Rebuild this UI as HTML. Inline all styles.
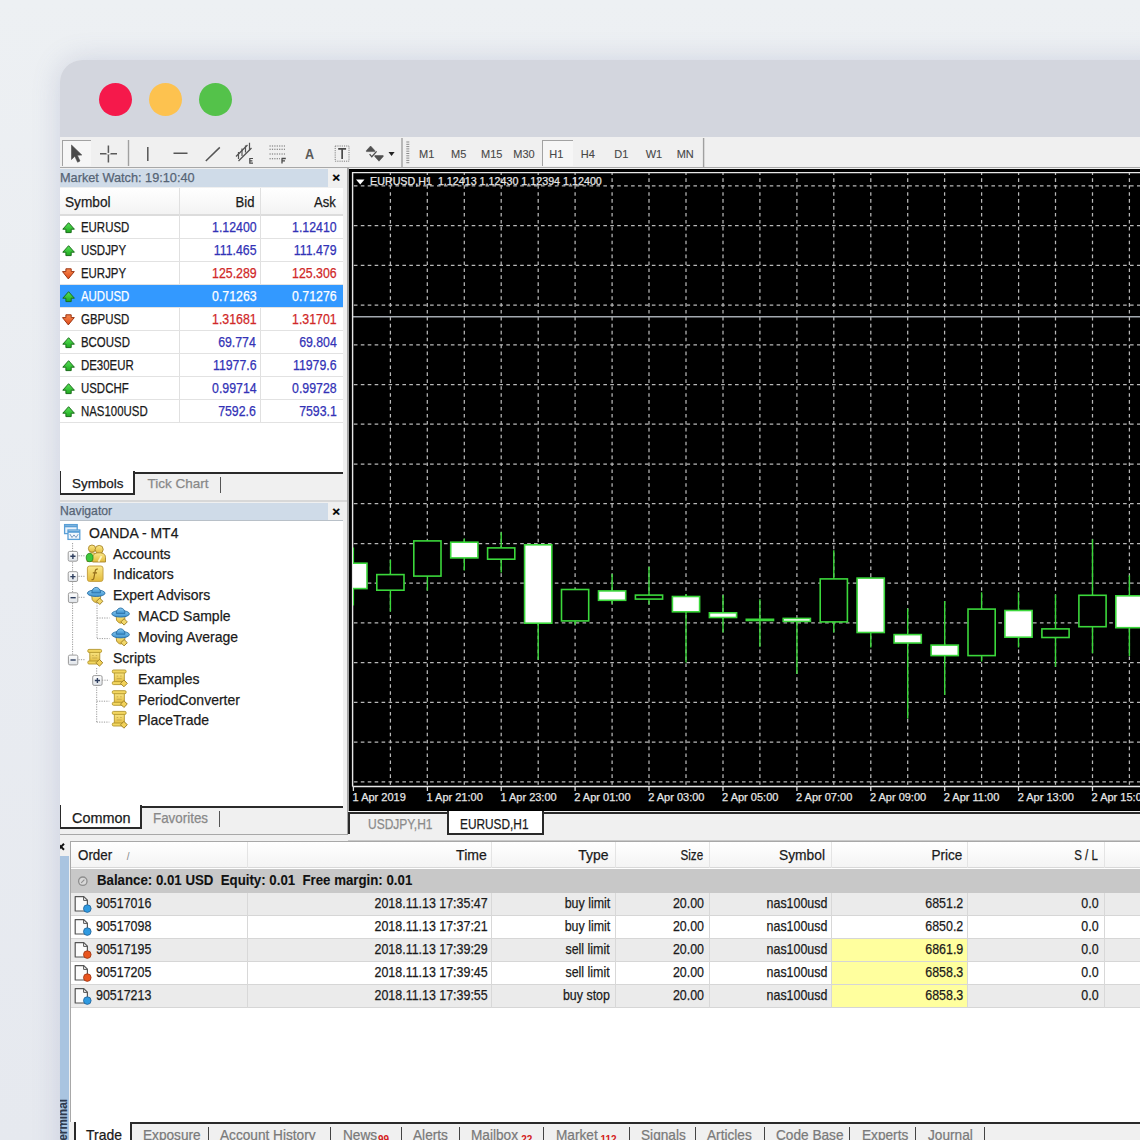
<!DOCTYPE html><html><head><meta charset="utf-8"><title>MT4</title><style>
*{margin:0;padding:0;box-sizing:border-box}
html,body{width:1140px;height:1140px;overflow:hidden}
body{position:relative;background:linear-gradient(180deg,#edf0f3 0%,#e9ecf1 50%,#e6e9ef 100%);font-family:"Liberation Sans",sans-serif;color:#1a1a1a}
.ab{position:absolute}
.t{position:absolute;white-space:nowrap;line-height:1}
svg{position:absolute;overflow:visible}
</style></head><body>
<div class="ab" style="left:60px;top:60px;width:1120px;height:1120px;border-top-left-radius:22px;background:#f0f0f0;box-shadow:0 0 28px rgba(100,110,160,0.22)"></div>
<div class="ab" style="left:60px;top:60px;width:1080px;height:77px;background:#d3d6de;border-top-left-radius:22px"></div>
<div class="ab" style="left:98.5px;top:83px;width:33px;height:33px;border-radius:50%;background:#f5194b"></div>
<div class="ab" style="left:148.5px;top:83px;width:33px;height:33px;border-radius:50%;background:#fdc24f"></div>
<div class="ab" style="left:198.5px;top:83px;width:33px;height:33px;border-radius:50%;background:#54c24a"></div>
<div class="ab" style="left:60px;top:137px;width:1080px;height:30px;background:#f0f0f0;"></div>
<div class="ab" style="left:60px;top:166.5px;width:1080px;height:1.5px;background:#a8a8a8;"></div>
<div class="ab" style="left:62px;top:139.5px;width:28.5px;height:26px;background:#f6f6f6;border-left:1.5px solid #a2a2a2;border-top:1.5px solid #a2a2a2"></div>
<div class="ab" style="left:542px;top:139.5px;width:31px;height:26px;background:#f6f6f6;border-left:1.5px solid #a2a2a2;border-top:1.5px solid #a2a2a2"></div>
<svg style="left:0;top:0" width="1140" height="200" viewBox="0 0 1140 200"><path d="M128.5 140V166M402 138V167M703.6 138V167" stroke="#a0a0a0" stroke-width="1.4"/><path d="M71.5 145L71.5 159.5L74.8 156.3L77.6 162.2L80 161L77.3 155.2L81.8 155z" fill="#4a4a4a" stroke="#4a4a4a" stroke-width="0.6" stroke-linejoin="round"/><path d="M108.4 145.5V162.5M100 153.7H117" stroke="#5a5a5a" stroke-width="1.5"/><path d="M106.5 153.7H110.5" stroke="#f0f0f0" stroke-width="1.6"/><path d="M147.8 147V161M173.5 153.3H187.5M205.8 161L219.8 147.4" stroke="#555" stroke-width="1.5"/><path d="M236 156.5L247.5 145M238.5 161L251.5 148" stroke="#555" stroke-width="1.3"/><path d="M238.5 152v7M242 148.5v7.5M245.5 145.5v7M249.5 142.8v7.5" stroke="#555" stroke-width="1.2"/><path d="M249.2 158.5h3.8M249.2 160.9h3.2M249.2 163.2h3.8M249.8 158.5V163.2" stroke="#4a4a4a" stroke-width="1.2"/><path d="M269.5 146H285M269.5 149.2H285M269.5 154H285M269.5 158.7H280" stroke="#6a6a6a" stroke-width="1.1" stroke-dasharray="1.2 1.2"/><path d="M281.5 158.5h4.3M281.5 160.9h3.5M282 158.5V163.5" stroke="#4a4a4a" stroke-width="1.3"/><rect x="335.2" y="146" width="13.8" height="15.2" fill="none" stroke="#7a7a7a" stroke-width="1" stroke-dasharray="1.1 1.1"/><path d="M338.2 148.8H346.1M342.15 148.8V159" stroke="#4a4a4a" stroke-width="1.7"/><path d="M366.4 150.6L370.6 146L374.8 150.6V151.6H366.4z M374.8 155.6H383.2V156.6L379 161.2L374.8 156.6z" fill="#505050" stroke="#505050" stroke-width="0.6" stroke-linejoin="round"/><path d="M369.6 154.2L371.8 156.8L376.6 151.4" stroke="#4e4e4e" stroke-width="1.3" fill="none"/><path d="M388.5 152.1H394.6L391.55 155.9z" fill="#222"/><path d="M406.3 142.0H409.3 M406.3 144.3H409.3 M406.3 146.6H409.3 M406.3 148.9H409.3 M406.3 151.2H409.3 M406.3 153.5H409.3 M406.3 155.8H409.3 M406.3 158.1H409.3 M406.3 160.4H409.3 M406.3 162.7H409.3" stroke="#8a8a8a" stroke-width="1"/></svg>
<div class="t" style="top:147.05px;font-size:14px;color:#5a5a5a;font-weight:bold;left:305.30px;transform:scaleX(0.900);transform-origin:0 0;">A</div>
<div class="t" style="top:148.69px;font-size:11px;color:#474747;-webkit-text-stroke:0.1px #474747;left:419.00px;">M1</div>
<div class="t" style="top:148.69px;font-size:11px;color:#474747;-webkit-text-stroke:0.1px #474747;left:451.00px;">M5</div>
<div class="t" style="top:148.69px;font-size:11px;color:#474747;-webkit-text-stroke:0.1px #474747;left:481.00px;">M15</div>
<div class="t" style="top:148.69px;font-size:11px;color:#474747;-webkit-text-stroke:0.1px #474747;left:513.30px;">M30</div>
<div class="t" style="top:148.69px;font-size:11px;color:#474747;-webkit-text-stroke:0.1px #474747;left:549.30px;">H1</div>
<div class="t" style="top:148.69px;font-size:11px;color:#474747;-webkit-text-stroke:0.1px #474747;left:580.70px;">H4</div>
<div class="t" style="top:148.69px;font-size:11px;color:#474747;-webkit-text-stroke:0.1px #474747;left:614.30px;">D1</div>
<div class="t" style="top:148.69px;font-size:11px;color:#474747;-webkit-text-stroke:0.1px #474747;left:645.70px;">W1</div>
<div class="t" style="top:148.69px;font-size:11px;color:#474747;-webkit-text-stroke:0.1px #474747;left:676.70px;">MN</div>
<div class="ab" style="left:60px;top:168px;width:289px;height:672px;background:#f0f0f0;"></div>
<div class="ab" style="left:60px;top:169px;width:268px;height:18px;background:#cfdbe8;"></div>
<div class="t" style="top:170.95px;font-size:13.4px;color:#566475;-webkit-text-stroke:0.25px #566475;left:60.00px;transform:scaleX(0.950);transform-origin:0 0;">Market Watch: 19:10:40</div>
<div class="t" style="top:170.77px;font-size:13.5px;color:#000;font-weight:bold;-webkit-text-stroke:0.2px #000;left:332.20px;">&#215;</div>
<div class="ab" style="left:60px;top:188px;width:283px;height:284px;background:#fff;"></div>
<div class="ab" style="left:60px;top:188px;width:283px;height:28px;background:linear-gradient(#fff,#f3f3f3);border-bottom:2px solid #dcdcdc"></div>
<div class="t" style="top:193.58px;font-size:15.5px;color:#1a1a1a;-webkit-text-stroke:0.25px #1a1a1a;left:64.70px;transform:scaleX(0.882);transform-origin:0 0;">Symbol</div>
<div class="t" style="top:193.58px;font-size:15.5px;color:#1a1a1a;-webkit-text-stroke:0.25px #1a1a1a;right:885.80px;transform:scaleX(0.844);transform-origin:100% 0;">Bid</div>
<div class="t" style="top:193.58px;font-size:15.5px;color:#1a1a1a;-webkit-text-stroke:0.25px #1a1a1a;right:804.20px;transform:scaleX(0.844);transform-origin:100% 0;">Ask</div>
<div class="ab" style="left:179px;top:188px;width:1px;height:235px;background:#e0e0e0;"></div>
<div class="ab" style="left:260px;top:188px;width:1px;height:235px;background:#e0e0e0;"></div>
<svg style="left:0;top:0" width="1" height="1"><defs><linearGradient id="ag" x1="0" y1="0" x2="0" y2="1"><stop offset="0" stop-color="#5ae45a"/><stop offset="1" stop-color="#1ea81e"/></linearGradient><linearGradient id="ar" x1="0" y1="0" x2="0" y2="1"><stop offset="0" stop-color="#f88a50"/><stop offset="1" stop-color="#e04a18"/></linearGradient></defs></svg>
<div class="ab" style="left:60px;top:238px;width:283px;height:1px;background:#e2e2e2;"></div>
<div class="t" style="top:219.85px;font-size:14.7px;color:#1a1a1a;-webkit-text-stroke:0.25px #1a1a1a;left:81.00px;transform:scaleX(0.778);transform-origin:0 0;">EURUSD</div>
<div class="t" style="top:220.45px;font-size:14px;color:#3232b6;-webkit-text-stroke:0.25px #3232b6;right:883.70px;transform:scaleX(0.880);transform-origin:100% 0;">1.12400</div>
<div class="t" style="top:220.45px;font-size:14px;color:#3232b6;-webkit-text-stroke:0.25px #3232b6;right:803.00px;transform:scaleX(0.880);transform-origin:100% 0;">1.12410</div>
<svg style="left:62px;top:221px" width="13" height="13" viewBox="0 0 13 13"><path d="M6.6 1.7L12.4 8.2H9.2V11.6H3.9V8.2H0.8z" fill="url(#ag)" stroke="#1a6e1a" stroke-width="1" stroke-linejoin="round"/></svg>
<div class="ab" style="left:60px;top:261px;width:283px;height:1px;background:#e2e2e2;"></div>
<div class="t" style="top:242.85px;font-size:14.7px;color:#1a1a1a;-webkit-text-stroke:0.25px #1a1a1a;left:81.00px;transform:scaleX(0.778);transform-origin:0 0;">USDJPY</div>
<div class="t" style="top:243.45px;font-size:14px;color:#3232b6;-webkit-text-stroke:0.25px #3232b6;right:883.70px;transform:scaleX(0.880);transform-origin:100% 0;">111.465</div>
<div class="t" style="top:243.45px;font-size:14px;color:#3232b6;-webkit-text-stroke:0.25px #3232b6;right:803.00px;transform:scaleX(0.880);transform-origin:100% 0;">111.479</div>
<svg style="left:62px;top:244px" width="13" height="13" viewBox="0 0 13 13"><path d="M6.6 1.7L12.4 8.2H9.2V11.6H3.9V8.2H0.8z" fill="url(#ag)" stroke="#1a6e1a" stroke-width="1" stroke-linejoin="round"/></svg>
<div class="ab" style="left:60px;top:284px;width:283px;height:1px;background:#e2e2e2;"></div>
<div class="t" style="top:265.85px;font-size:14.7px;color:#1a1a1a;-webkit-text-stroke:0.25px #1a1a1a;left:81.00px;transform:scaleX(0.778);transform-origin:0 0;">EURJPY</div>
<div class="t" style="top:266.45px;font-size:14px;color:#d02828;-webkit-text-stroke:0.25px #d02828;right:883.70px;transform:scaleX(0.880);transform-origin:100% 0;">125.289</div>
<div class="t" style="top:266.45px;font-size:14px;color:#d02828;-webkit-text-stroke:0.25px #d02828;right:803.00px;transform:scaleX(0.880);transform-origin:100% 0;">125.306</div>
<svg style="left:62px;top:267px" width="13" height="13" viewBox="0 0 13 13"><path d="M3.9 1.8H9.2V4.6H12.3L6.3 11.9L0.5 4.6H3.9z" fill="url(#ar)" stroke="#9a3412" stroke-width="1" stroke-linejoin="round"/></svg>
<div class="ab" style="left:60px;top:285px;width:283px;height:23px;background:#3399ff;"></div>
<div class="ab" style="left:60px;top:307px;width:283px;height:1px;background:#e2e2e2;"></div>
<div class="t" style="top:288.85px;font-size:14.7px;color:#fff;-webkit-text-stroke:0.25px #fff;left:81.00px;transform:scaleX(0.778);transform-origin:0 0;">AUDUSD</div>
<div class="t" style="top:289.45px;font-size:14px;color:#fff;-webkit-text-stroke:0.25px #fff;right:883.70px;transform:scaleX(0.880);transform-origin:100% 0;">0.71263</div>
<div class="t" style="top:289.45px;font-size:14px;color:#fff;-webkit-text-stroke:0.25px #fff;right:803.00px;transform:scaleX(0.880);transform-origin:100% 0;">0.71276</div>
<svg style="left:62px;top:290px" width="13" height="13" viewBox="0 0 13 13"><path d="M6.6 1.7L12.4 8.2H9.2V11.6H3.9V8.2H0.8z" fill="url(#ag)" stroke="#1a6e1a" stroke-width="1" stroke-linejoin="round"/></svg>
<div class="ab" style="left:60px;top:330px;width:283px;height:1px;background:#e2e2e2;"></div>
<div class="t" style="top:311.85px;font-size:14.7px;color:#1a1a1a;-webkit-text-stroke:0.25px #1a1a1a;left:81.00px;transform:scaleX(0.778);transform-origin:0 0;">GBPUSD</div>
<div class="t" style="top:312.45px;font-size:14px;color:#d02828;-webkit-text-stroke:0.25px #d02828;right:883.70px;transform:scaleX(0.880);transform-origin:100% 0;">1.31681</div>
<div class="t" style="top:312.45px;font-size:14px;color:#d02828;-webkit-text-stroke:0.25px #d02828;right:803.00px;transform:scaleX(0.880);transform-origin:100% 0;">1.31701</div>
<svg style="left:62px;top:313px" width="13" height="13" viewBox="0 0 13 13"><path d="M3.9 1.8H9.2V4.6H12.3L6.3 11.9L0.5 4.6H3.9z" fill="url(#ar)" stroke="#9a3412" stroke-width="1" stroke-linejoin="round"/></svg>
<div class="ab" style="left:60px;top:353px;width:283px;height:1px;background:#e2e2e2;"></div>
<div class="t" style="top:334.85px;font-size:14.7px;color:#1a1a1a;-webkit-text-stroke:0.25px #1a1a1a;left:81.00px;transform:scaleX(0.778);transform-origin:0 0;">BCOUSD</div>
<div class="t" style="top:335.45px;font-size:14px;color:#3232b6;-webkit-text-stroke:0.25px #3232b6;right:883.70px;transform:scaleX(0.880);transform-origin:100% 0;">69.774</div>
<div class="t" style="top:335.45px;font-size:14px;color:#3232b6;-webkit-text-stroke:0.25px #3232b6;right:803.00px;transform:scaleX(0.880);transform-origin:100% 0;">69.804</div>
<svg style="left:62px;top:336px" width="13" height="13" viewBox="0 0 13 13"><path d="M6.6 1.7L12.4 8.2H9.2V11.6H3.9V8.2H0.8z" fill="url(#ag)" stroke="#1a6e1a" stroke-width="1" stroke-linejoin="round"/></svg>
<div class="ab" style="left:60px;top:376px;width:283px;height:1px;background:#e2e2e2;"></div>
<div class="t" style="top:357.85px;font-size:14.7px;color:#1a1a1a;-webkit-text-stroke:0.25px #1a1a1a;left:81.00px;transform:scaleX(0.778);transform-origin:0 0;">DE30EUR</div>
<div class="t" style="top:358.45px;font-size:14px;color:#3232b6;-webkit-text-stroke:0.25px #3232b6;right:883.70px;transform:scaleX(0.880);transform-origin:100% 0;">11977.6</div>
<div class="t" style="top:358.45px;font-size:14px;color:#3232b6;-webkit-text-stroke:0.25px #3232b6;right:803.00px;transform:scaleX(0.880);transform-origin:100% 0;">11979.6</div>
<svg style="left:62px;top:359px" width="13" height="13" viewBox="0 0 13 13"><path d="M6.6 1.7L12.4 8.2H9.2V11.6H3.9V8.2H0.8z" fill="url(#ag)" stroke="#1a6e1a" stroke-width="1" stroke-linejoin="round"/></svg>
<div class="ab" style="left:60px;top:399px;width:283px;height:1px;background:#e2e2e2;"></div>
<div class="t" style="top:380.85px;font-size:14.7px;color:#1a1a1a;-webkit-text-stroke:0.25px #1a1a1a;left:81.00px;transform:scaleX(0.778);transform-origin:0 0;">USDCHF</div>
<div class="t" style="top:381.45px;font-size:14px;color:#3232b6;-webkit-text-stroke:0.25px #3232b6;right:883.70px;transform:scaleX(0.880);transform-origin:100% 0;">0.99714</div>
<div class="t" style="top:381.45px;font-size:14px;color:#3232b6;-webkit-text-stroke:0.25px #3232b6;right:803.00px;transform:scaleX(0.880);transform-origin:100% 0;">0.99728</div>
<svg style="left:62px;top:382px" width="13" height="13" viewBox="0 0 13 13"><path d="M6.6 1.7L12.4 8.2H9.2V11.6H3.9V8.2H0.8z" fill="url(#ag)" stroke="#1a6e1a" stroke-width="1" stroke-linejoin="round"/></svg>
<div class="ab" style="left:60px;top:422px;width:283px;height:1px;background:#e2e2e2;"></div>
<div class="t" style="top:403.85px;font-size:14.7px;color:#1a1a1a;-webkit-text-stroke:0.25px #1a1a1a;left:81.00px;transform:scaleX(0.778);transform-origin:0 0;">NAS100USD</div>
<div class="t" style="top:404.45px;font-size:14px;color:#3232b6;-webkit-text-stroke:0.25px #3232b6;right:883.70px;transform:scaleX(0.880);transform-origin:100% 0;">7592.6</div>
<div class="t" style="top:404.45px;font-size:14px;color:#3232b6;-webkit-text-stroke:0.25px #3232b6;right:803.00px;transform:scaleX(0.880);transform-origin:100% 0;">7593.1</div>
<svg style="left:62px;top:405px" width="13" height="13" viewBox="0 0 13 13"><path d="M6.6 1.7L12.4 8.2H9.2V11.6H3.9V8.2H0.8z" fill="url(#ag)" stroke="#1a6e1a" stroke-width="1" stroke-linejoin="round"/></svg>
<div class="ab" style="left:60px;top:472px;width:283px;height:23px;background:#f0f0f0;border-top:2px solid #2a2a2a"></div>
<div class="ab" style="left:60px;top:471px;width:75px;height:24px;background:#fff;border-left:1px solid #2a2a2a;border-right:2px solid #2a2a2a;border-bottom:2px solid #2a2a2a"></div>
<div class="t" style="top:476.57px;font-size:13.5px;color:#1a1a1a;-webkit-text-stroke:0.25px #1a1a1a;left:71.80px;transform:scaleX(0.993);transform-origin:0 0;">Symbols</div>
<div class="t" style="top:476.57px;font-size:13.5px;color:#888;-webkit-text-stroke:0.25px #888;left:147.60px;">Tick Chart</div>
<div class="ab" style="left:220px;top:477px;width:1px;height:16px;background:#555;"></div>
<div class="ab" style="left:60px;top:500px;width:289px;height:2px;background:#d8d8d8;"></div>
<div class="ab" style="left:60px;top:503px;width:268px;height:17px;background:#cfdbe8;"></div>
<div class="ab" style="left:60px;top:520px;width:283px;height:1px;background:#b8c0c8;"></div>
<div class="t" style="top:505.30px;font-size:12.4px;color:#566475;-webkit-text-stroke:0.25px #566475;left:60.00px;transform:scaleX(0.982);transform-origin:0 0;">Navigator</div>
<div class="t" style="top:504.97px;font-size:13.5px;color:#000;font-weight:bold;-webkit-text-stroke:0.2px #000;left:332.20px;">&#215;</div>
<div class="ab" style="left:60px;top:521px;width:283px;height:285px;background:#fff;"></div>
<div class="t" style="top:524.70px;font-size:15px;color:#1a1a1a;-webkit-text-stroke:0.25px #1a1a1a;left:89.20px;transform:scaleX(0.933);transform-origin:0 0;">OANDA - MT4</div>
<div class="t" style="top:545.60px;font-size:15px;color:#1a1a1a;-webkit-text-stroke:0.25px #1a1a1a;left:112.90px;transform:scaleX(0.933);transform-origin:0 0;">Accounts</div>
<div class="t" style="top:566.40px;font-size:15px;color:#1a1a1a;-webkit-text-stroke:0.25px #1a1a1a;left:112.90px;transform:scaleX(0.933);transform-origin:0 0;">Indicators</div>
<div class="t" style="top:587.30px;font-size:15px;color:#1a1a1a;-webkit-text-stroke:0.25px #1a1a1a;left:112.90px;transform:scaleX(0.933);transform-origin:0 0;">Expert Advisors</div>
<div class="t" style="top:608.10px;font-size:15px;color:#1a1a1a;-webkit-text-stroke:0.25px #1a1a1a;left:137.50px;transform:scaleX(0.933);transform-origin:0 0;">MACD Sample</div>
<div class="t" style="top:629.00px;font-size:15px;color:#1a1a1a;-webkit-text-stroke:0.25px #1a1a1a;left:137.50px;transform:scaleX(0.933);transform-origin:0 0;">Moving Average</div>
<div class="t" style="top:649.80px;font-size:15px;color:#1a1a1a;-webkit-text-stroke:0.25px #1a1a1a;left:113.00px;transform:scaleX(0.933);transform-origin:0 0;">Scripts</div>
<div class="t" style="top:670.70px;font-size:15px;color:#1a1a1a;-webkit-text-stroke:0.25px #1a1a1a;left:137.50px;transform:scaleX(0.933);transform-origin:0 0;">Examples</div>
<div class="t" style="top:691.50px;font-size:15px;color:#1a1a1a;-webkit-text-stroke:0.25px #1a1a1a;left:137.50px;transform:scaleX(0.933);transform-origin:0 0;">PeriodConverter</div>
<div class="t" style="top:712.30px;font-size:15px;color:#1a1a1a;-webkit-text-stroke:0.25px #1a1a1a;left:137.50px;transform:scaleX(0.933);transform-origin:0 0;">PlaceTrade</div>
<div class="ab" style="left:60px;top:806px;width:283px;height:23px;background:#f0f0f0;border-top:2px solid #2a2a2a"></div>
<div class="ab" style="left:60px;top:805px;width:82px;height:24px;background:#fff;border-left:1px solid #2a2a2a;border-right:2px solid #2a2a2a;border-bottom:2px solid #2a2a2a"></div>
<div class="t" style="top:809.80px;font-size:15px;color:#1a1a1a;-webkit-text-stroke:0.25px #1a1a1a;left:71.50px;transform:scaleX(0.961);transform-origin:0 0;">Common</div>
<div class="t" style="top:809.80px;font-size:15px;color:#888;-webkit-text-stroke:0.25px #888;left:152.50px;transform:scaleX(0.892);transform-origin:0 0;">Favorites</div>
<div class="ab" style="left:219px;top:811px;width:1px;height:16px;background:#555;"></div>
<div class="ab" style="left:60px;top:834px;width:289px;height:1px;background:#a8a8a8;"></div>
<div class="ab" style="left:347.2px;top:168px;width:1.8px;height:667px;background:#a4a4a4;"></div>
<svg style="left:0;top:0" width="1140" height="900" viewBox="0 0 1140 900"><defs>
<linearGradient id="gy" x1="0" y1="0" x2="0" y2="1"><stop offset="0" stop-color="#fbe98a"/><stop offset="1" stop-color="#e2b93a"/></linearGradient>
<linearGradient id="gb" x1="0" y1="0" x2="0" y2="1"><stop offset="0" stop-color="#8ccdf2"/><stop offset="1" stop-color="#3a8fce"/></linearGradient>
<linearGradient id="ge" x1="0" y1="0" x2="0" y2="1"><stop offset="0" stop-color="#fff"/><stop offset="1" stop-color="#dfe3e8"/></linearGradient>
<symbol id="ea" viewBox="0 0 19 19" overflow="visible">
 <path d="M4.5 9.5h9l-0.5 4.5c-1 2-3 3-4 3s-3-1-4-3z" fill="url(#gy)" stroke="#a88a2a" stroke-width="0.9"/>
 <path d="M12.5 12.5l3.2 3.2-3.2 3.2-3.2-3.2z" fill="#f2d86a" stroke="#9a7a22" stroke-width="0.9"/>
 <ellipse cx="9" cy="7.6" rx="8.8" ry="3.3" fill="url(#gb)" stroke="#2a6fa5" stroke-width="0.9"/>
 <path d="M4.6 7.2c0-3.2 2-5.4 4.4-5.4s4.4 2.2 4.4 5.4z" fill="url(#gb)" stroke="#2a6fa5" stroke-width="0.9"/>
</symbol>
<symbol id="sc" viewBox="0 0 16 17" overflow="visible">
 <rect x="2.6" y="2" width="10" height="11.5" fill="url(#gy)" stroke="#b2962e" stroke-width="0.9"/>
 <rect x="0.6" y="0.4" width="13.8" height="3" rx="1.2" fill="#f3d660" stroke="#b2962e" stroke-width="0.9"/>
 <rect x="0.6" y="12" width="13.8" height="3" rx="1.2" fill="#f3d660" stroke="#b2962e" stroke-width="0.9"/>
 <path d="M5 6.5h1.5M8.5 6.5h1.5M5 9h5" stroke="#c6a94a" stroke-width="0.9"/>
 <path d="M12.2 10.4l3.4 3.4-3.4 3.4-3.4-3.4z" fill="#f2d25a" stroke="#9a7a22" stroke-width="0.9"/>
</symbol>
<symbol id="pl" viewBox="0 0 10 10" overflow="visible">
 <rect x="0.5" y="0.5" width="9.4" height="9.8" rx="1.5" fill="url(#ge)" stroke="#9a9a9a" stroke-width="1"/>
 <path d="M2.6 5.4H7.8M5.2 2.8V8" stroke="#2e3e5e" stroke-width="1.4"/>
</symbol>
<symbol id="mi" viewBox="0 0 10 10" overflow="visible">
 <rect x="0.5" y="0.5" width="9.4" height="9.8" rx="1.5" fill="url(#ge)" stroke="#9a9a9a" stroke-width="1"/>
 <path d="M2.6 5.4H7.8" stroke="#2e3e5e" stroke-width="1.4"/>
</symbol>
</defs><path d="M72.6 543V659.7M78.5 555.8H85.5M78.5 576.3H85.5M78.5 597.3H85.5M78.5 659.7H85.5" stroke="#9a9a9a" stroke-width="1" stroke-dasharray="1.2 1.2" fill="none"/><path d="M97 603V638.6M97 618H109.5M97 638.6H109.5" stroke="#9a9a9a" stroke-width="1" stroke-dasharray="1.2 1.2" fill="none"/><path d="M96.7 668V722.1M102 680.2H109.3M96.7 701.2H109.3M96.7 722.1H109.3" stroke="#9a9a9a" stroke-width="1" stroke-dasharray="1.2 1.2" fill="none"/><use href="#pl" x="67.7" y="550.9" width="10" height="10"/><use href="#pl" x="67.7" y="571.2" width="10" height="10"/><use href="#mi" x="67.9" y="592.3" width="10" height="10"/><use href="#mi" x="67.9" y="654.6" width="10" height="10"/><use href="#pl" x="92.2" y="675.1" width="10" height="10"/><rect x="64.6" y="524.6" width="12.6" height="9" fill="#eaf3fb" stroke="#5a9fd6" stroke-width="1.3"/><path d="M64.6 526.3h12.6" stroke="#5a9fd6" stroke-width="2"/><rect x="68" y="530" width="11.8" height="9.4" fill="#f3f8fd" stroke="#5a9fd6" stroke-width="1.3"/><path d="M68 531.8h11.8" stroke="#5a9fd6" stroke-width="2"/><path d="M69.8 534l2.2 3.5 2-2.6 2 2.6 2.2-3.3" stroke="#6a8fb8" stroke-width="0.9" fill="none"/><circle cx="92" cy="548.6" r="3.6" fill="url(#gy)" stroke="#a8862a" stroke-width="0.9"/><path d="M87 561.5v-4.2c0-3 2-4.6 5-4.6s5 1.6 5 4.6v4.2z" fill="url(#gy)" stroke="#a8862a" stroke-width="0.9"/><circle cx="99.2" cy="549.4" r="4" fill="url(#gy)" stroke="#a8862a" stroke-width="0.9"/><path d="M92.6 562v-4.4c0-3.2 2.6-4.8 6.6-4.8s6.3 1.6 6.3 4.8v4.4z" fill="url(#gy)" stroke="#a8862a" stroke-width="0.9"/><path d="M98.5 561.6l3-5.5" stroke="#fff3c0" stroke-width="1.8"/><ellipse cx="89.6" cy="557.6" rx="3.4" ry="4.1" fill="#3cc83c" stroke="#1d8a1f" stroke-width="0.8"/><rect x="87.4" y="566" width="15.6" height="15.4" rx="2.2" fill="url(#gy)" stroke="#c6a244" stroke-width="1"/><path d="M97.8 569.2c-1.6-0.4-2.4 0.5-2.7 2.3l-1.2 6.4c-0.3 1.5-1 2-2.4 1.7M92.8 572.8h4.2" stroke="#946d1a" stroke-width="1.2" fill="none"/><use href="#ea" x="87.2" y="585.6" width="19" height="19"/><use href="#ea" x="111.6" y="606.2" width="19" height="19"/><use href="#ea" x="111.6" y="627" width="19" height="19"/><use href="#sc" x="87.2" y="649" width="16" height="17"/><use href="#sc" x="111.7" y="669.6" width="16" height="17"/><use href="#sc" x="111.7" y="690.3" width="16" height="17"/><use href="#sc" x="111.7" y="711" width="16" height="17"/></svg>
<div class="ab" style="left:349px;top:169px;width:791px;height:641.5px;background:#000;"></div>
<svg style="left:0;top:0" width="1140" height="1140" viewBox="0 0 1140 1140"><defs><clipPath id="pc"><rect x="353" y="173" width="787" height="613"/></clipPath></defs><path d="M353 185.8H1140 M353 225.5H1140 M353 265.3H1140 M353 305.0H1140 M353 344.8H1140 M353 384.5H1140 M353 424.2H1140 M353 464.0H1140 M353 503.7H1140 M353 543.5H1140 M353 583.2H1140 M353 622.9H1140 M353 662.7H1140 M353 702.4H1140 M353 742.2H1140 M353 781.9H1140" stroke="#b8b8b8" stroke-width="1.25" stroke-dasharray="3.6 3.33" stroke-dashoffset="6.06" fill="none"/><path d="M390.4 173V786 M427.3 173V786 M464.3 173V786 M501.2 173V786 M538.2 173V786 M575.1 173V786 M612.1 173V786 M649.0 173V786 M686.0 173V786 M723.0 173V786 M759.9 173V786 M796.9 173V786 M833.8 173V786 M870.8 173V786 M907.7 173V786 M944.6 173V786 M981.6 173V786 M1018.6 173V786 M1055.5 173V786 M1092.5 173V786 M1129.4 173V786" stroke="#b8b8b8" stroke-width="1.25" stroke-dasharray="3.6 3.33" stroke-dashoffset="1.6" fill="none"/><path d="M353 316.7H1140" stroke="#a3a9b0" stroke-width="1.5" fill="none"/><path d="M352.6 786.5V172.6H1140 M352.6 786.5H1140" stroke="#e8e8e8" stroke-width="1.4" fill="none"/><g clip-path="url(#pc)"><path d="M353.4 547.5V605.4" stroke="#3bd83b" stroke-width="1.4"/><rect x="339.8" y="563.2" width="27.2" height="25.4" fill="#fff" stroke="#3bd83b" stroke-width="1.6"/><path d="M390.4 559.8V611.6" stroke="#3bd83b" stroke-width="1.4"/><rect x="376.8" y="574.6" width="27.2" height="15.6" fill="#000" stroke="#3bd83b" stroke-width="1.6"/><path d="M427.4 540.2V590.5" stroke="#3bd83b" stroke-width="1.4"/><rect x="413.8" y="540.9" width="27.2" height="35.2" fill="#000" stroke="#3bd83b" stroke-width="1.6"/><path d="M464.3 538.4V570.4" stroke="#3bd83b" stroke-width="1.4"/><rect x="450.7" y="542.2" width="27.2" height="15.7" fill="#fff" stroke="#3bd83b" stroke-width="1.6"/><path d="M501.2 532.3V572.6" stroke="#3bd83b" stroke-width="1.4"/><rect x="487.6" y="547.9" width="27.2" height="11.3" fill="#000" stroke="#3bd83b" stroke-width="1.6"/><path d="M538.2 544.1V659.8" stroke="#3bd83b" stroke-width="1.4"/><rect x="524.6" y="544.8" width="27.2" height="78.4" fill="#fff" stroke="#3bd83b" stroke-width="1.6"/><path d="M575.1 588.8V624.7" stroke="#3bd83b" stroke-width="1.4"/><rect x="561.5" y="589.5" width="27.2" height="31.4" fill="#000" stroke="#3bd83b" stroke-width="1.6"/><path d="M612.1 573.9V603.7" stroke="#3bd83b" stroke-width="1.4"/><rect x="598.5" y="590.9" width="27.2" height="9.4" fill="#fff" stroke="#3bd83b" stroke-width="1.6"/><path d="M649.0 566.8V604.6" stroke="#3bd83b" stroke-width="1.4"/><rect x="635.4" y="595.1" width="27.2" height="4.0" fill="#000" stroke="#3bd83b" stroke-width="1.6"/><path d="M686.0 594.0V662.5" stroke="#3bd83b" stroke-width="1.4"/><rect x="672.4" y="596.5" width="27.2" height="15.3" fill="#fff" stroke="#3bd83b" stroke-width="1.6"/><path d="M723.0 594.9V632.6" stroke="#3bd83b" stroke-width="1.4"/><rect x="709.4" y="612.8" width="27.2" height="4.7" fill="#fff" stroke="#3bd83b" stroke-width="1.6"/><path d="M759.9 599.3V646.7" stroke="#3bd83b" stroke-width="1.4"/><rect x="746.3" y="619.3" width="27.2" height="1.2" fill="#000" stroke="#3bd83b" stroke-width="1.6"/><path d="M796.9 617.7V673.9" stroke="#3bd83b" stroke-width="1.4"/><rect x="783.2" y="618.4" width="27.2" height="3.0" fill="#fff" stroke="#3bd83b" stroke-width="1.6"/><path d="M833.8 550.2V632.6" stroke="#3bd83b" stroke-width="1.4"/><rect x="820.2" y="578.9" width="27.2" height="43.0" fill="#000" stroke="#3bd83b" stroke-width="1.6"/><path d="M870.8 577.4V647.5" stroke="#3bd83b" stroke-width="1.4"/><rect x="857.1" y="578.1" width="27.2" height="54.4" fill="#fff" stroke="#3bd83b" stroke-width="1.6"/><path d="M907.7 608.6V718.6" stroke="#3bd83b" stroke-width="1.4"/><rect x="894.1" y="634.6" width="27.2" height="8.4" fill="#fff" stroke="#3bd83b" stroke-width="1.6"/><path d="M944.7 601.0V694.9" stroke="#3bd83b" stroke-width="1.4"/><rect x="931.1" y="645.1" width="27.2" height="10.5" fill="#fff" stroke="#3bd83b" stroke-width="1.6"/><path d="M981.6 592.3V661.6" stroke="#3bd83b" stroke-width="1.4"/><rect x="968.0" y="609.1" width="27.2" height="46.5" fill="#000" stroke="#3bd83b" stroke-width="1.6"/><path d="M1018.5 592.3V647.5" stroke="#3bd83b" stroke-width="1.4"/><rect x="1004.9" y="610.5" width="27.2" height="26.7" fill="#fff" stroke="#3bd83b" stroke-width="1.6"/><path d="M1055.5 594.6V666.8" stroke="#3bd83b" stroke-width="1.4"/><rect x="1041.9" y="628.9" width="27.2" height="8.6" fill="#000" stroke="#3bd83b" stroke-width="1.6"/><path d="M1092.5 539.3V653.3" stroke="#3bd83b" stroke-width="1.4"/><rect x="1078.9" y="595.3" width="27.2" height="31.4" fill="#000" stroke="#3bd83b" stroke-width="1.6"/><path d="M1129.4 575.3V656.0" stroke="#3bd83b" stroke-width="1.4"/><rect x="1115.8" y="595.8" width="27.2" height="31.9" fill="#fff" stroke="#3bd83b" stroke-width="1.6"/></g><path d="M353.4 786V791 M427.4 786V791 M501.2 786V791 M575.1 786V791 M649.0 786V791 M723.0 786V791 M796.9 786V791 M870.8 786V791 M944.7 786V791 M1018.5 786V791 M1092.5 786V791" stroke="#ddd" stroke-width="1.3"/><path d="M356 179.5h8.5l-4.25 5z" fill="#fff"/></svg>
<div class="t" style="top:176.46px;font-size:11.5px;color:#e6e6e6;-webkit-text-stroke:0.25px #e6e6e6;left:370.00px;transform:scaleX(0.932);transform-origin:0 0;">EURUSD,H1&nbsp; 1.12413 1.12430 1.12394 1.12400</div>
<div class="t" style="top:791.69px;font-size:11px;color:#e6e6e6;-webkit-text-stroke:0.25px #e6e6e6;left:352.60px;">1 Apr 2019</div>
<div class="t" style="top:791.69px;font-size:11px;color:#e6e6e6;-webkit-text-stroke:0.25px #e6e6e6;left:426.50px;">1 Apr 21:00</div>
<div class="t" style="top:791.69px;font-size:11px;color:#e6e6e6;-webkit-text-stroke:0.25px #e6e6e6;left:500.40px;">1 Apr 23:00</div>
<div class="t" style="top:791.69px;font-size:11px;color:#e6e6e6;-webkit-text-stroke:0.25px #e6e6e6;left:574.30px;">2 Apr 01:00</div>
<div class="t" style="top:791.69px;font-size:11px;color:#e6e6e6;-webkit-text-stroke:0.25px #e6e6e6;left:648.20px;">2 Apr 03:00</div>
<div class="t" style="top:791.69px;font-size:11px;color:#e6e6e6;-webkit-text-stroke:0.25px #e6e6e6;left:722.10px;">2 Apr 05:00</div>
<div class="t" style="top:791.69px;font-size:11px;color:#e6e6e6;-webkit-text-stroke:0.25px #e6e6e6;left:796.00px;">2 Apr 07:00</div>
<div class="t" style="top:791.69px;font-size:11px;color:#e6e6e6;-webkit-text-stroke:0.25px #e6e6e6;left:869.90px;">2 Apr 09:00</div>
<div class="t" style="top:791.69px;font-size:11px;color:#e6e6e6;-webkit-text-stroke:0.25px #e6e6e6;left:943.80px;">2 Apr 11:00</div>
<div class="t" style="top:791.69px;font-size:11px;color:#e6e6e6;-webkit-text-stroke:0.25px #e6e6e6;left:1017.70px;">2 Apr 13:00</div>
<div class="t" style="top:791.69px;font-size:11px;color:#e6e6e6;-webkit-text-stroke:0.25px #e6e6e6;left:1091.60px;">2 Apr 15:00</div>
<div class="ab" style="left:348px;top:810.5px;width:792px;height:30px;background:#f0f0f0;"></div>
<div class="ab" style="left:348px;top:812.3px;width:792px;height:1.8px;background:#2a2a2a;"></div>
<div class="ab" style="left:348px;top:812.3px;width:1.8px;height:22px;background:#2a2a2a;"></div>
<div class="ab" style="left:447px;top:810.5px;width:97px;height:24.5px;background:#fff;border:2px solid #2a2a2a;border-top:none"></div>
<div class="t" style="top:815.60px;font-size:15px;color:#8a8a8a;-webkit-text-stroke:0.25px #8a8a8a;left:367.60px;transform:scaleX(0.800);transform-origin:0 0;">USDJPY,H1</div>
<div class="t" style="top:815.60px;font-size:15px;color:#1a1a1a;-webkit-text-stroke:0.25px #1a1a1a;left:459.70px;transform:scaleX(0.790);transform-origin:0 0;">EURUSD,H1</div>
<div class="ab" style="left:348px;top:840px;width:792px;height:1px;background:#c8c8c8;"></div>
<div class="ab" style="left:60px;top:841px;width:1080px;height:299px;background:#f0f0f0;"></div>
<div class="ab" style="left:60px;top:856px;width:9px;height:284px;background:#a9c4e0;"></div>
<div class="ab" style="left:70px;top:841px;width:1070px;height:281px;background:#fff;border-left:1px solid #a8a8a8;border-top:1px solid #a8a8a8"></div>
<div class="ab" style="left:71px;top:842px;width:1069px;height:26px;background:linear-gradient(#fff,#f4f4f4);border-bottom:1px solid #d8d8d8"></div>
<div class="t" style="top:846.70px;font-size:15px;color:#1a1a1a;-webkit-text-stroke:0.25px #1a1a1a;left:78.40px;transform:scaleX(0.892);transform-origin:0 0;">Order</div>
<div class="t" style="top:851.53px;font-size:10px;color:#888;left:126.70px;">/</div>
<div class="t" style="top:846.60px;font-size:15px;color:#1a1a1a;-webkit-text-stroke:0.25px #1a1a1a;right:653.00px;transform:scaleX(0.937);transform-origin:100% 0;">Time</div>
<div class="t" style="top:846.60px;font-size:15px;color:#1a1a1a;-webkit-text-stroke:0.25px #1a1a1a;right:531.00px;transform:scaleX(0.932);transform-origin:100% 0;">Type</div>
<div class="t" style="top:846.60px;font-size:15px;color:#1a1a1a;-webkit-text-stroke:0.25px #1a1a1a;right:437.00px;transform:scaleX(0.778);transform-origin:100% 0;">Size</div>
<div class="t" style="top:846.60px;font-size:15px;color:#1a1a1a;-webkit-text-stroke:0.25px #1a1a1a;right:315.00px;transform:scaleX(0.920);transform-origin:100% 0;">Symbol</div>
<div class="t" style="top:846.60px;font-size:15px;color:#1a1a1a;-webkit-text-stroke:0.25px #1a1a1a;right:178.00px;transform:scaleX(0.901);transform-origin:100% 0;">Price</div>
<div class="t" style="top:846.60px;font-size:15px;color:#1a1a1a;-webkit-text-stroke:0.25px #1a1a1a;right:42.40px;transform:scaleX(0.768);transform-origin:100% 0;">S / L</div>
<div class="ab" style="left:71px;top:869px;width:1069px;height:24px;background:#c8c8c8;"></div>
<div class="t" style="top:873.02px;font-size:14.5px;color:#111;font-weight:bold;-webkit-text-stroke:0.1px #111;left:96.80px;transform:scaleX(0.914);transform-origin:0 0;">Balance: 0.01 USD&nbsp; Equity: 0.01&nbsp; Free margin: 0.01</div>
<div class="ab" style="left:71px;top:893px;width:1069px;height:23px;background:#ebebeb;"></div>
<div class="ab" style="left:71px;top:914.5px;width:1069px;height:1.5px;background:#d6d6d6;"></div>
<div class="t" style="top:896.07px;font-size:14.8px;color:#1a1a1a;-webkit-text-stroke:0.25px #1a1a1a;left:95.90px;transform:scaleX(0.840);transform-origin:0 0;">90517016</div>
<div class="t" style="top:896.07px;font-size:14.8px;color:#1a1a1a;-webkit-text-stroke:0.25px #1a1a1a;right:652.50px;transform:scaleX(0.840);transform-origin:100% 0;">2018.11.13 17:35:47</div>
<div class="t" style="top:896.07px;font-size:14.8px;color:#1a1a1a;-webkit-text-stroke:0.25px #1a1a1a;right:530.00px;transform:scaleX(0.840);transform-origin:100% 0;">buy limit</div>
<div class="t" style="top:896.07px;font-size:14.8px;color:#1a1a1a;-webkit-text-stroke:0.25px #1a1a1a;right:436.00px;transform:scaleX(0.840);transform-origin:100% 0;">20.00</div>
<div class="t" style="top:896.07px;font-size:14.8px;color:#1a1a1a;-webkit-text-stroke:0.25px #1a1a1a;right:312.50px;transform:scaleX(0.840);transform-origin:100% 0;">nas100usd</div>
<div class="t" style="top:896.07px;font-size:14.8px;color:#1a1a1a;-webkit-text-stroke:0.25px #1a1a1a;right:177.00px;transform:scaleX(0.840);transform-origin:100% 0;">6851.2</div>
<div class="t" style="top:896.07px;font-size:14.8px;color:#1a1a1a;-webkit-text-stroke:0.25px #1a1a1a;right:41.00px;transform:scaleX(0.840);transform-origin:100% 0;">0.0</div>
<div class="ab" style="left:71px;top:916px;width:1069px;height:23px;background:#fff;"></div>
<div class="ab" style="left:71px;top:937.5px;width:1069px;height:1.5px;background:#d6d6d6;"></div>
<div class="t" style="top:919.07px;font-size:14.8px;color:#1a1a1a;-webkit-text-stroke:0.25px #1a1a1a;left:95.90px;transform:scaleX(0.840);transform-origin:0 0;">90517098</div>
<div class="t" style="top:919.07px;font-size:14.8px;color:#1a1a1a;-webkit-text-stroke:0.25px #1a1a1a;right:652.50px;transform:scaleX(0.840);transform-origin:100% 0;">2018.11.13 17:37:21</div>
<div class="t" style="top:919.07px;font-size:14.8px;color:#1a1a1a;-webkit-text-stroke:0.25px #1a1a1a;right:530.00px;transform:scaleX(0.840);transform-origin:100% 0;">buy limit</div>
<div class="t" style="top:919.07px;font-size:14.8px;color:#1a1a1a;-webkit-text-stroke:0.25px #1a1a1a;right:436.00px;transform:scaleX(0.840);transform-origin:100% 0;">20.00</div>
<div class="t" style="top:919.07px;font-size:14.8px;color:#1a1a1a;-webkit-text-stroke:0.25px #1a1a1a;right:312.50px;transform:scaleX(0.840);transform-origin:100% 0;">nas100usd</div>
<div class="t" style="top:919.07px;font-size:14.8px;color:#1a1a1a;-webkit-text-stroke:0.25px #1a1a1a;right:177.00px;transform:scaleX(0.840);transform-origin:100% 0;">6850.2</div>
<div class="t" style="top:919.07px;font-size:14.8px;color:#1a1a1a;-webkit-text-stroke:0.25px #1a1a1a;right:41.00px;transform:scaleX(0.840);transform-origin:100% 0;">0.0</div>
<div class="ab" style="left:71px;top:939px;width:1069px;height:23px;background:#ebebeb;"></div>
<div class="ab" style="left:71px;top:960.5px;width:1069px;height:1.5px;background:#d6d6d6;"></div>
<div class="ab" style="left:832px;top:939px;width:135px;height:21.5px;background:#ffff9e;"></div>
<div class="t" style="top:942.07px;font-size:14.8px;color:#1a1a1a;-webkit-text-stroke:0.25px #1a1a1a;left:95.90px;transform:scaleX(0.840);transform-origin:0 0;">90517195</div>
<div class="t" style="top:942.07px;font-size:14.8px;color:#1a1a1a;-webkit-text-stroke:0.25px #1a1a1a;right:652.50px;transform:scaleX(0.840);transform-origin:100% 0;">2018.11.13 17:39:29</div>
<div class="t" style="top:942.07px;font-size:14.8px;color:#1a1a1a;-webkit-text-stroke:0.25px #1a1a1a;right:530.00px;transform:scaleX(0.840);transform-origin:100% 0;">sell limit</div>
<div class="t" style="top:942.07px;font-size:14.8px;color:#1a1a1a;-webkit-text-stroke:0.25px #1a1a1a;right:436.00px;transform:scaleX(0.840);transform-origin:100% 0;">20.00</div>
<div class="t" style="top:942.07px;font-size:14.8px;color:#1a1a1a;-webkit-text-stroke:0.25px #1a1a1a;right:312.50px;transform:scaleX(0.840);transform-origin:100% 0;">nas100usd</div>
<div class="t" style="top:942.07px;font-size:14.8px;color:#1a1a1a;-webkit-text-stroke:0.25px #1a1a1a;right:177.00px;transform:scaleX(0.840);transform-origin:100% 0;">6861.9</div>
<div class="t" style="top:942.07px;font-size:14.8px;color:#1a1a1a;-webkit-text-stroke:0.25px #1a1a1a;right:41.00px;transform:scaleX(0.840);transform-origin:100% 0;">0.0</div>
<div class="ab" style="left:71px;top:962px;width:1069px;height:23px;background:#fff;"></div>
<div class="ab" style="left:71px;top:983.5px;width:1069px;height:1.5px;background:#d6d6d6;"></div>
<div class="ab" style="left:832px;top:962px;width:135px;height:21.5px;background:#ffff9e;"></div>
<div class="t" style="top:965.07px;font-size:14.8px;color:#1a1a1a;-webkit-text-stroke:0.25px #1a1a1a;left:95.90px;transform:scaleX(0.840);transform-origin:0 0;">90517205</div>
<div class="t" style="top:965.07px;font-size:14.8px;color:#1a1a1a;-webkit-text-stroke:0.25px #1a1a1a;right:652.50px;transform:scaleX(0.840);transform-origin:100% 0;">2018.11.13 17:39:45</div>
<div class="t" style="top:965.07px;font-size:14.8px;color:#1a1a1a;-webkit-text-stroke:0.25px #1a1a1a;right:530.00px;transform:scaleX(0.840);transform-origin:100% 0;">sell limit</div>
<div class="t" style="top:965.07px;font-size:14.8px;color:#1a1a1a;-webkit-text-stroke:0.25px #1a1a1a;right:436.00px;transform:scaleX(0.840);transform-origin:100% 0;">20.00</div>
<div class="t" style="top:965.07px;font-size:14.8px;color:#1a1a1a;-webkit-text-stroke:0.25px #1a1a1a;right:312.50px;transform:scaleX(0.840);transform-origin:100% 0;">nas100usd</div>
<div class="t" style="top:965.07px;font-size:14.8px;color:#1a1a1a;-webkit-text-stroke:0.25px #1a1a1a;right:177.00px;transform:scaleX(0.840);transform-origin:100% 0;">6858.3</div>
<div class="t" style="top:965.07px;font-size:14.8px;color:#1a1a1a;-webkit-text-stroke:0.25px #1a1a1a;right:41.00px;transform:scaleX(0.840);transform-origin:100% 0;">0.0</div>
<div class="ab" style="left:71px;top:985px;width:1069px;height:23px;background:#ebebeb;"></div>
<div class="ab" style="left:71px;top:1006.5px;width:1069px;height:1.5px;background:#d6d6d6;"></div>
<div class="ab" style="left:832px;top:985px;width:135px;height:21.5px;background:#ffff9e;"></div>
<div class="t" style="top:988.07px;font-size:14.8px;color:#1a1a1a;-webkit-text-stroke:0.25px #1a1a1a;left:95.90px;transform:scaleX(0.840);transform-origin:0 0;">90517213</div>
<div class="t" style="top:988.07px;font-size:14.8px;color:#1a1a1a;-webkit-text-stroke:0.25px #1a1a1a;right:652.50px;transform:scaleX(0.840);transform-origin:100% 0;">2018.11.13 17:39:55</div>
<div class="t" style="top:988.07px;font-size:14.8px;color:#1a1a1a;-webkit-text-stroke:0.25px #1a1a1a;right:530.00px;transform:scaleX(0.840);transform-origin:100% 0;">buy stop</div>
<div class="t" style="top:988.07px;font-size:14.8px;color:#1a1a1a;-webkit-text-stroke:0.25px #1a1a1a;right:436.00px;transform:scaleX(0.840);transform-origin:100% 0;">20.00</div>
<div class="t" style="top:988.07px;font-size:14.8px;color:#1a1a1a;-webkit-text-stroke:0.25px #1a1a1a;right:312.50px;transform:scaleX(0.840);transform-origin:100% 0;">nas100usd</div>
<div class="t" style="top:988.07px;font-size:14.8px;color:#1a1a1a;-webkit-text-stroke:0.25px #1a1a1a;right:177.00px;transform:scaleX(0.840);transform-origin:100% 0;">6858.3</div>
<div class="t" style="top:988.07px;font-size:14.8px;color:#1a1a1a;-webkit-text-stroke:0.25px #1a1a1a;right:41.00px;transform:scaleX(0.840);transform-origin:100% 0;">0.0</div>
<div class="ab" style="left:246.5px;top:842px;width:1px;height:26px;background:#e4e4e4;"></div>
<div class="ab" style="left:246.5px;top:893px;width:1px;height:115px;background:#d8d8d8;"></div>
<div class="ab" style="left:491px;top:842px;width:1px;height:26px;background:#e4e4e4;"></div>
<div class="ab" style="left:491px;top:893px;width:1px;height:115px;background:#d8d8d8;"></div>
<div class="ab" style="left:615px;top:842px;width:1px;height:26px;background:#e4e4e4;"></div>
<div class="ab" style="left:615px;top:893px;width:1px;height:115px;background:#d8d8d8;"></div>
<div class="ab" style="left:708.5px;top:842px;width:1px;height:26px;background:#e4e4e4;"></div>
<div class="ab" style="left:708.5px;top:893px;width:1px;height:115px;background:#d8d8d8;"></div>
<div class="ab" style="left:831px;top:842px;width:1px;height:26px;background:#e4e4e4;"></div>
<div class="ab" style="left:831px;top:893px;width:1px;height:115px;background:#d8d8d8;"></div>
<div class="ab" style="left:967px;top:842px;width:1px;height:26px;background:#e4e4e4;"></div>
<div class="ab" style="left:967px;top:893px;width:1px;height:115px;background:#d8d8d8;"></div>
<div class="ab" style="left:1104px;top:842px;width:1px;height:26px;background:#e4e4e4;"></div>
<div class="ab" style="left:1104px;top:893px;width:1px;height:115px;background:#d8d8d8;"></div>
<svg style="left:0;top:0" width="1140" height="1140" viewBox="0 0 1140 1140"><circle cx="82.8" cy="881.2" r="4.2" fill="#d8d8d8" stroke="#8e8e8e" stroke-width="1.3"/><path d="M81.2 882.8L84.4 879.6" stroke="#8e8e8e" stroke-width="1.1"/><path d="M75.2 896.6h8.6l3.6 3.6v10.8h-12.2z" fill="#fbfbfb" stroke="#555" stroke-width="1.2" stroke-linejoin="round"/><path d="M83.6 896.8v3.6h3.6" fill="none" stroke="#555" stroke-width="1"/><circle cx="87.3" cy="908.6" r="3.8" fill="#2f9ae0" stroke="#1f5f95" stroke-width="0.8"/><path d="M75.2 919.6h8.6l3.6 3.6v10.8h-12.2z" fill="#fbfbfb" stroke="#555" stroke-width="1.2" stroke-linejoin="round"/><path d="M83.6 919.8v3.6h3.6" fill="none" stroke="#555" stroke-width="1"/><circle cx="87.3" cy="931.6" r="3.8" fill="#2f9ae0" stroke="#1f5f95" stroke-width="0.8"/><path d="M75.2 942.6h8.6l3.6 3.6v10.8h-12.2z" fill="#fbfbfb" stroke="#555" stroke-width="1.2" stroke-linejoin="round"/><path d="M83.6 942.8v3.6h3.6" fill="none" stroke="#555" stroke-width="1"/><circle cx="87.3" cy="954.6" r="3.8" fill="#e8541e" stroke="#9a3210" stroke-width="0.8"/><path d="M75.2 965.6h8.6l3.6 3.6v10.8h-12.2z" fill="#fbfbfb" stroke="#555" stroke-width="1.2" stroke-linejoin="round"/><path d="M83.6 965.8v3.6h3.6" fill="none" stroke="#555" stroke-width="1"/><circle cx="87.3" cy="977.6" r="3.8" fill="#e8541e" stroke="#9a3210" stroke-width="0.8"/><path d="M75.2 988.6h8.6l3.6 3.6v10.8h-12.2z" fill="#fbfbfb" stroke="#555" stroke-width="1.2" stroke-linejoin="round"/><path d="M83.6 988.8v3.6h3.6" fill="none" stroke="#555" stroke-width="1"/><circle cx="87.3" cy="1000.6" r="3.8" fill="#2f9ae0" stroke="#1f5f95" stroke-width="0.8"/></svg>
<svg style="left:0;top:0" width="80" height="870" viewBox="0 0 80 870"><defs><clipPath id="cx"><rect x="60" y="835" width="20" height="30"/></clipPath></defs><path clip-path="url(#cx)" d="M58 844L64 849.8M64 843.8L58 849.8" stroke="#111" stroke-width="2"/></svg>
<div class="ab" style="left:60px;top:850px;width:10px;height:290px;overflow:hidden"><div class="t" style="left:-3.7px;top:297px;font-size:13.5px;font-weight:bold;color:#2e3a4e;transform:rotate(-90deg);transform-origin:0 0;width:70px;-webkit-text-stroke:0.1px #2e3a4e;"><span style="display:inline-block;transform:scaleX(0.87);transform-origin:0 0">Terminal</span></div></div>
<div class="ab" style="left:71px;top:1122px;width:1069px;height:18px;background:#f0f0f0;"></div>
<div class="ab" style="left:131px;top:1122px;width:1009px;height:2px;background:#2a2a2a;"></div>
<div class="ab" style="left:74px;top:1122px;width:58px;height:18px;background:#fff;border-left:2px solid #2a2a2a;border-right:2px solid #2a2a2a"></div>
<div class="t" style="top:1126.80px;font-size:15px;color:#1a1a1a;-webkit-text-stroke:0.25px #1a1a1a;left:85.50px;transform:scaleX(0.930);transform-origin:0 0;">Trade</div>
<div class="t" style="top:1126.80px;font-size:15px;color:#7a7a7a;-webkit-text-stroke:0.25px #7a7a7a;left:143.00px;transform:scaleX(0.910);transform-origin:0 0;">Exposure</div>
<div class="ab" style="left:208px;top:1126.7px;width:1.3px;height:14px;background:#444;"></div>
<div class="t" style="top:1126.80px;font-size:15px;color:#7a7a7a;-webkit-text-stroke:0.25px #7a7a7a;left:220.30px;transform:scaleX(0.910);transform-origin:0 0;">Account History</div>
<div class="ab" style="left:330px;top:1126.7px;width:1.3px;height:14px;background:#444;"></div>
<div class="t" style="top:1126.80px;font-size:15px;color:#7a7a7a;-webkit-text-stroke:0.25px #7a7a7a;left:343.00px;transform:scaleX(0.910);transform-origin:0 0;">News</div>
<div class="ab" style="left:401px;top:1126.7px;width:1.3px;height:14px;background:#444;"></div>
<div class="t" style="top:1126.80px;font-size:15px;color:#7a7a7a;-webkit-text-stroke:0.25px #7a7a7a;left:413.00px;transform:scaleX(0.910);transform-origin:0 0;">Alerts</div>
<div class="ab" style="left:459px;top:1126.7px;width:1.3px;height:14px;background:#444;"></div>
<div class="t" style="top:1126.80px;font-size:15px;color:#7a7a7a;-webkit-text-stroke:0.25px #7a7a7a;left:471.00px;transform:scaleX(0.910);transform-origin:0 0;">Mailbox</div>
<div class="ab" style="left:543px;top:1126.7px;width:1.3px;height:14px;background:#444;"></div>
<div class="t" style="top:1126.80px;font-size:15px;color:#7a7a7a;-webkit-text-stroke:0.25px #7a7a7a;left:556.00px;transform:scaleX(0.910);transform-origin:0 0;">Market</div>
<div class="ab" style="left:629px;top:1126.7px;width:1.3px;height:14px;background:#444;"></div>
<div class="t" style="top:1126.80px;font-size:15px;color:#7a7a7a;-webkit-text-stroke:0.25px #7a7a7a;left:641.00px;transform:scaleX(0.910);transform-origin:0 0;">Signals</div>
<div class="ab" style="left:695px;top:1126.7px;width:1.3px;height:14px;background:#444;"></div>
<div class="t" style="top:1126.80px;font-size:15px;color:#7a7a7a;-webkit-text-stroke:0.25px #7a7a7a;left:707.00px;transform:scaleX(0.910);transform-origin:0 0;">Articles</div>
<div class="ab" style="left:764px;top:1126.7px;width:1.3px;height:14px;background:#444;"></div>
<div class="t" style="top:1126.80px;font-size:15px;color:#7a7a7a;-webkit-text-stroke:0.25px #7a7a7a;left:776.00px;transform:scaleX(0.910);transform-origin:0 0;">Code Base</div>
<div class="ab" style="left:849px;top:1126.7px;width:1.3px;height:14px;background:#444;"></div>
<div class="t" style="top:1126.80px;font-size:15px;color:#7a7a7a;-webkit-text-stroke:0.25px #7a7a7a;left:862.00px;transform:scaleX(0.910);transform-origin:0 0;">Experts</div>
<div class="ab" style="left:915px;top:1126.7px;width:1.3px;height:14px;background:#444;"></div>
<div class="t" style="top:1126.80px;font-size:15px;color:#7a7a7a;-webkit-text-stroke:0.25px #7a7a7a;left:928.00px;transform:scaleX(0.910);transform-origin:0 0;">Journal</div>
<div class="ab" style="left:984px;top:1126.7px;width:1.3px;height:14px;background:#444;"></div>
<div class="t" style="top:1134.53px;font-size:10px;color:#d42020;font-weight:bold;left:378.00px;">99</div>
<div class="t" style="top:1134.53px;font-size:10px;color:#d42020;font-weight:bold;left:521.30px;">22</div>
<div class="t" style="top:1134.53px;font-size:10px;color:#d42020;font-weight:bold;left:600.50px;">112</div>
</body></html>
